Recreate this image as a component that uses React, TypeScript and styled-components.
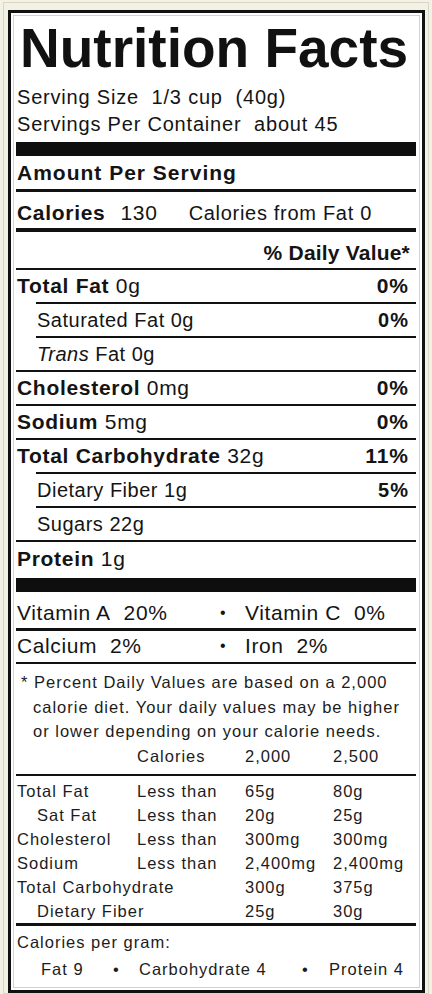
import styled, { createGlobalStyle } from "styled-components";

type Nutrient = {
  name: string;
  amount: string;
  percent?: string;
  sub?: boolean;
  italic?: string;
};

const nutrients: Nutrient[] = [
  { name: "Total Fat", amount: "0g", percent: "0%" },
  { name: "Saturated Fat", amount: "0g", percent: "0%", sub: true },
  { name: "Fat", amount: "0g", sub: true, italic: "Trans" },
  { name: "Cholesterol", amount: "0mg", percent: "0%" },
  { name: "Sodium", amount: "5mg", percent: "0%" },
  { name: "Total Carbohydrate", amount: "32g", percent: "11%" },
  { name: "Dietary Fiber", amount: "1g", percent: "5%", sub: true },
  { name: "Sugars", amount: "22g", sub: true },
];

const limits = [
  { name: "Total Fat", rule: "Less than", a: "65g", b: "80g" },
  { name: "Sat Fat", rule: "Less than", a: "20g", b: "25g", sub: true },
  { name: "Cholesterol", rule: "Less than", a: "300mg", b: "300mg" },
  { name: "Sodium", rule: "Less than", a: "2,400mg", b: "2,400mg" },
  { name: "Total Carbohydrate", rule: "", a: "300g", b: "375g" },
  { name: "Dietary Fiber", rule: "", a: "25g", b: "30g", sub: true },
];

const App = () => {
  return (
    <Page>
      <GlobalStyle />
      <Frame>
        <Label>
          <Inner>
            <Title>Nutrition Facts</Title>
            <Serving>
              <div>Serving Size&nbsp; 1/3 cup&nbsp; (40g)</div>
              <div>Servings Per Container&nbsp; about 45</div>
            </Serving>
            <Bar $h={14} $mt={4} />
            <AmountRow>Amount Per Serving</AmountRow>
            <Rule $h={3} />
            <TallRow>
              <span>
                <b>Calories</b>
                <CalValue>130</CalValue>
                <FromFat>Calories from Fat 0</FromFat>
              </span>
            </TallRow>
            <Rule $h={4} />
            <TallRow $end>
              <b>% Daily Value*</b>
            </TallRow>
            <Rule $h={2} />
            {nutrients.map((n, i) => (
              <div key={n.name + i}>
                {i > 0 && <Rule $h={2} $indent={n.sub} />}
                <NutrientRow $sub={n.sub}>
                  <span>
                    {n.sub ? (
                      <>
                        {n.italic && <i>{n.italic} </i>}
                        {n.name} {n.amount}
                      </>
                    ) : (
                      <>
                        <b>{n.name}</b> {n.amount}
                      </>
                    )}
                  </span>
                  {n.percent && <Percent>{n.percent}</Percent>}
                </NutrientRow>
              </div>
            ))}
            <Rule $h={2} />
            <NutrientRow $last>
              <span>
                <b>Protein</b> 1g
              </span>
            </NutrientRow>
            <Bar $h={14} />
            <VitaminRow $first>
              <span>Vitamin A&nbsp; 20%</span>
              <Bullet>•</Bullet>
              <span>Vitamin C&nbsp; 0%</span>
            </VitaminRow>
            <Rule $h={3} />
            <VitaminRow>
              <span>Calcium&nbsp; 2%</span>
              <Bullet>•</Bullet>
              <span>Iron&nbsp; 2%</span>
            </VitaminRow>
            <Rule $h={2} />
            <Footnote>
              <Note>
                * Percent Daily Values are based on a 2,000
                <br />
                calorie diet. Your daily values may be higher
                <br />
                or lower depending on your calorie needs.
              </Note>
              <LimitRow>
                <span />
                <span>Calories</span>
                <span>2,000</span>
                <span>2,500</span>
              </LimitRow>
            </Footnote>
            <Rule $h={2} />
            <LimitTable>
              {limits.map((l) => (
                <LimitRow key={l.name}>
                  <LimitName $sub={l.sub}>{l.name}</LimitName>
                  <span>{l.rule}</span>
                  <span>{l.a}</span>
                  <span>{l.b}</span>
                </LimitRow>
              ))}
            </LimitTable>
            <Rule $h={3} />
            <PerGram>Calories per gram:</PerGram>
            <Macros>
              <span>Fat 9</span>
              <span>•</span>
              <span>Carbohydrate 4</span>
              <span>•</span>
              <span>Protein 4</span>
            </Macros>
          </Inner>
        </Label>
      </Frame>
    </Page>
  );
};

export default App;

const GlobalStyle = createGlobalStyle`
  html, body {
    margin: 0;
    padding: 0;
    background: #f3f0e4;
  }
  body {
    font-family: "Liberation Sans", Arial, Helvetica, sans-serif;
    color: #141414;
  }
`;

const Page = styled.div`
  box-sizing: border-box;
  width: 432px;
  height: 994px;
  padding: 2px 0 0 3px;
`;

const Frame = styled.div`
  box-sizing: border-box;
  width: 426px;
  height: 992px;
  border: 1px solid #d9d5c7;
  padding: 7px 0 0 4px;
`;

const Label = styled.div`
  box-sizing: border-box;
  width: 417px;
  height: 983px;
  border: 3px solid #111;
  background: #fff;
  padding: 2px;
`;

const Inner = styled.div`
  box-sizing: border-box;
  height: 100%;
  border: 1px solid #d2d2d2;
  padding: 0 3px 0 2px;
  display: flex;
  flex-direction: column;
`;

const Title = styled.h1`
  margin: 0;
  font-size: 55px;
  line-height: 64px;
  font-weight: 700;
  letter-spacing: 0;
  padding-left: 4px;
  white-space: nowrap;
  color: #111;
`;

const Serving = styled.div`
  margin-top: 4px;
  padding-left: 1px;
  font-size: 20px;
  line-height: 27px;
  letter-spacing: 0.8px;
`;

const Bar = styled.div<{ $h: number; $mt?: number }>`
  height: ${(p) => p.$h}px;
  margin-top: ${(p) => p.$mt ?? 0}px;
  background: #0e0e0e;
  flex-shrink: 0;
`;

const Rule = styled.div<{ $h: number; $indent?: boolean }>`
  height: ${(p) => p.$h}px;
  margin-left: ${(p) => (p.$indent ? 20 : 0)}px;
  background: #111;
  flex-shrink: 0;
`;

const AmountRow = styled.div`
  height: 33px;
  line-height: 33px;
  padding-left: 1px;
  font-size: 21px;
  font-weight: 700;
  letter-spacing: 1px;
`;

const TallRow = styled.div<{ $end?: boolean }>`
  box-sizing: border-box;
  display: flex;
  justify-content: ${(p) => (p.$end ? "flex-end" : "flex-start")};
  height: 36px;
  padding: 6px 6px 0 1px;
  line-height: 30px;
  font-size: 21px;
  letter-spacing: 0.7px;
  white-space: nowrap;

  b {
    letter-spacing: ${(p) => (p.$end ? "0.2px" : "0.7px")};
  }
`;

const CalValue = styled.span`
  margin-left: 15px;
`;

const FromFat = styled.span`
  margin-left: 31px;
  font-size: 20px;
`;

const NutrientRow = styled.div<{ $sub?: boolean; $last?: boolean }>`
  box-sizing: border-box;
  display: flex;
  justify-content: space-between;
  height: ${(p) => (p.$last ? 36 : 32)}px;
  padding: ${(p) => (p.$last ? "1px" : "0")} 7px 0 1px;
  margin-left: ${(p) => (p.$sub ? 20 : 0)}px;
  line-height: 32px;
  font-size: ${(p) => (p.$sub ? 20 : 21)}px;
  letter-spacing: ${(p) => (p.$sub ? 0.5 : 0.7)}px;
  white-space: nowrap;
`;

const Percent = styled.b`
  letter-spacing: 1px;
`;

const VitaminRow = styled.div<{ $first?: boolean }>`
  box-sizing: border-box;
  display: grid;
  grid-template-columns: 203px 25px 1fr;
  height: ${(p) => (p.$first ? 36 : 31)}px;
  padding: ${(p) => (p.$first ? 6 : 0)}px 0 0 1px;
  line-height: 30px;
  font-size: 21px;
  letter-spacing: 0.6px;
  white-space: nowrap;
`;

const Bullet = styled.span`
  font-size: 16px;
`;

const Footnote = styled.div`
  padding: 6px 0 6px 0;
  font-size: 16.5px;
  line-height: 24.5px;
  letter-spacing: 1px;
  color: #1c1c1c;
`;

const Note = styled.div`
  padding-left: 17px;
  text-indent: -12px;
  white-space: nowrap;
`;

const LimitTable = styled.div`
  padding-top: 3px;
  font-size: 16.5px;
  letter-spacing: 1px;
  color: #1c1c1c;
`;

const LimitRow = styled.div`
  display: grid;
  grid-template-columns: 120px 108px 88px 1fr;
  padding-left: 1px;
  height: 24px;
  line-height: 24px;
  white-space: nowrap;
`;

const LimitName = styled.span<{ $sub?: boolean }>`
  padding-left: ${(p) => (p.$sub ? 20 : 0)}px;
`;

const PerGram = styled.div`
  margin-top: 4px;
  padding-left: 1px;
  font-size: 16.5px;
  line-height: 24px;
  letter-spacing: 1px;
  color: #1c1c1c;
`;

const Macros = styled.div`
  display: grid;
  grid-template-columns: 72px 26px 163px 27px 1fr;
  margin-top: 3px;
  padding-left: 25px;
  font-size: 16.5px;
  line-height: 24px;
  letter-spacing: 1px;
  color: #1c1c1c;
  white-space: nowrap;
`;
